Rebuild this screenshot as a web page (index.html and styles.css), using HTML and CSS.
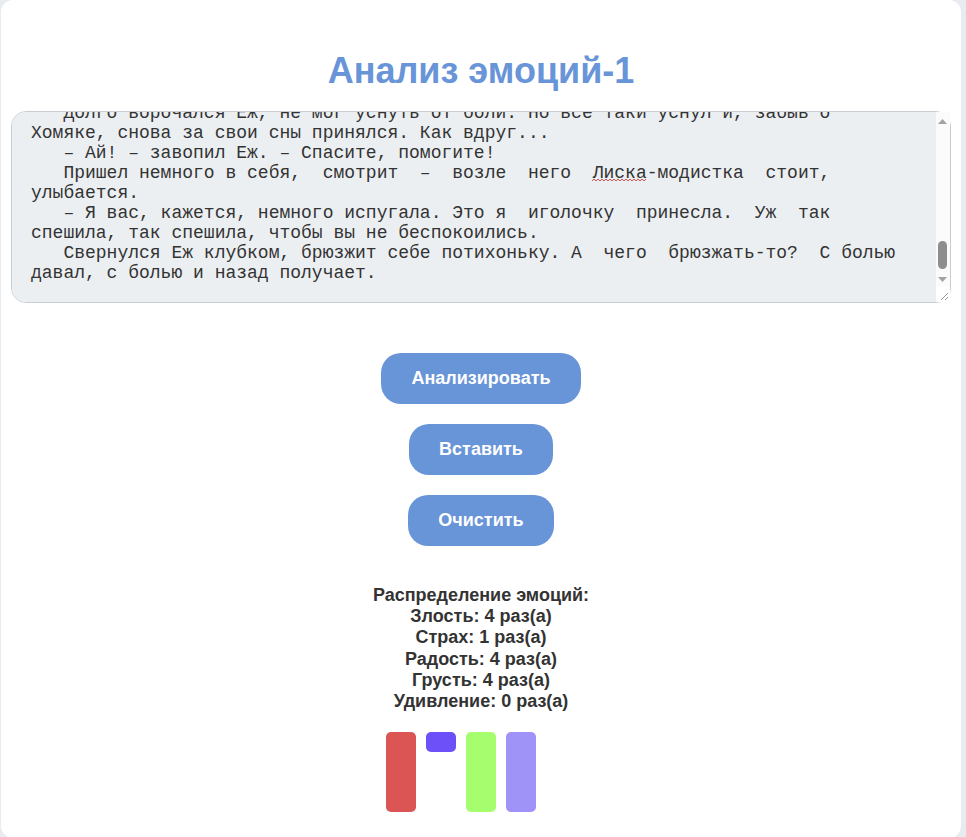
FILE: index.html
```html
<!DOCTYPE html>
<html lang="ru">
<head>
<meta charset="utf-8">
<title>Анализ эмоций-1</title>
<link rel="stylesheet" href="styles.css">
</head>
<body>
<main class="card">
  <h1 class="title">Анализ эмоций-1</h1>
  <div class="editor">
    <textarea class="story" id="story" spellcheck="false">   Жил-был в лесу Еж. Был он колючий, сердитый и никого к себе близко не подпускал. Соседи его сторонились, а он и рад: никто не мешает спать да сны смотреть.
   Любил Еж поспать. Заберется под старый пень, свернется клубком и спит до самого обеда. А во сне видит то грибы, то яблоки, то целую гору сладких ягод.
   Однажды пришел к нему Хомяк и говорит:
   – Одолжи, Еж, мне иголочку. Хочу себе жилетку зашить, порвалась совсем.
   – Ишь чего захотел! – фыркнул Еж. – Иголок у меня и самому мало.
   – Да у тебя их целая тыща! – удивился Хомяк. – Одной не жалко.
   – Не жалко, говоришь? А больно будет кому? Мне будет больно, а не тебе.
   Подумал Еж, подумал, да и выдернул иголку. Больно было, но отдал. Ушел Хомяк довольный, а Еж улегся под куст и стал ворчать.
   – Ходят тут всякие, спать не дают. Иголки им подавай! А кто мне мои иголки вернет? Никто не вернет.
   На другой день пришла Белка.
   – Еж, голубчик, дай иголочку. Орешки на зиму нанизывать буду.
   Опять выдернул Еж иголку, опять больно было. Белка поблагодарила и ускакала, а Еж сидит, бок потирает.
   Потом прибежал Заяц, за ним Мышка, а за Мышкой и Сорока прилетела. Всем нужна иголочка, всем хочется что-нибудь зашить, подшить да нанизать.
   – Мне бы пуговку пришить, – пищит Мышка.
   – А мне бы ушко заштопать, – просит Заяц.
   – А мне бы бусы собрать, – стрекочет Сорока.
   Никому Еж не отказал. Всем по иголочке дал. Только бока у него теперь голые стали, а на спине и вовсе проплешина.
   К вечеру у Ежа на боку совсем мало иголок осталось. Лег он спать, а сон не идет: то тут колет, то там ноет.
   – Вот ведь как бывает, – бормочет Еж. – Хотел как лучше, а вышло как всегда. Добрым быть – дело хорошее, да уж больно колючее.
   А в лесу тем временем все при деле. Хомяк жилетку зашил, Белка орешки нанизала, Заяц ушко заштопал, Мышка пуговку пришила, а Сорока бусы собрала и на ветке красуется.
   Долго ворочался Еж, не мог уснуть от боли. Но все таки уснул и, забыв о Хомяке, снова за свои сны принялся. Как вдруг...
   – Ай! – завопил Еж. – Спасите, помогите!
   Пришел немного в себя,  смотрит  –  возле  него  Лиска-модистка  стоит, улыбается.
   – Я вас, кажется, немного испугала. Это я  иголочку  принесла.  Уж  так спешила, так спешила, чтобы вы не беспокоились.
   Свернулся Еж клубком, брюзжит себе потихоньку. А  чего  брюзжать-то?  С болью давал, с болью и назад получает.</textarea>
    <svg class="spell" width="54" height="4" viewBox="0 0 54 4" aria-hidden="true">
      <path d="M0 3 L2 1 L4 3 L6 1 L8 3 L10 1 L12 3 L14 1 L16 3 L18 1 L20 3 L22 1 L24 3 L26 1 L28 3 L30 1 L32 3 L34 1 L36 3 L38 1 L40 3 L42 1 L44 3 L46 1 L48 3 L50 1 L52 3 L54 1" fill="none" stroke="#e05252" stroke-width="1"/>
    </svg>
    <div class="vscroll" aria-hidden="true">
      <svg class="arrow arrow-up" width="9" height="5" viewBox="0 0 9 5"><path d="M4.5 0 L9 5 L0 5 Z" fill="#a3a3a3"/></svg>
      <div class="thumb"></div>
      <svg class="arrow arrow-down" width="9" height="5" viewBox="0 0 9 5"><path d="M0 0 L9 0 L4.5 5 Z" fill="#a3a3a3"/></svg>
    </div>
    <div class="grip" aria-hidden="true">
      <svg width="14" height="15" viewBox="0 0 14 15"><path d="M5 13 L12 6 M9 13 L12 10" stroke="#9a9a9a" stroke-width="1" fill="none"/></svg>
    </div>
  </div>
  <div class="actions">
    <button class="btn" type="button">Анализировать</button>
    <button class="btn" type="button">Вставить</button>
    <button class="btn" type="button">Очистить</button>
  </div>
  <div class="result">
    <div>Распределение эмоций:</div>
    <div>Злость: 4 раз(а)</div>
    <div>Страх: 1 раз(а)</div>
    <div>Радость: 4 раз(а)</div>
    <div>Грусть: 4 раз(а)</div>
    <div>Удивление: 0 раз(а)</div>
  </div>
  <div class="chart">
    <div class="bar bar-anger" style="height:80px"></div>
    <div class="bar bar-fear" style="height:20px"></div>
    <div class="bar bar-joy" style="height:80px"></div>
    <div class="bar bar-sad" style="height:80px"></div>
    <div class="bar bar-surprise" style="height:0px"></div>
  </div>
</main>
<script src="script.js"></script>
</body>
</html>
```

FILE: styles.css
```css
html, body {
  margin: 0;
  padding: 0;
}
body {
  background: #e8ebef;
  font-family: "Liberation Sans", Arial, sans-serif;
  color: #333;
}
.card {
  box-sizing: border-box;
  width: 960px;
  margin: 0 5px 0 1px;
  padding: 0 10px 26px;
  background: #ffffff;
  border-radius: 12px;
  display: flex;
  flex-direction: column;
  align-items: center;
}
.title {
  margin: 50px 0 19px;
  font-size: 36px;
  font-weight: bold;
  color: #6894d8;
  text-align: center;
}
.editor {
  position: relative;
  width: 940px;
  height: 192px;
}
.story {
  box-sizing: border-box;
  display: block;
  width: 940px;
  height: 192px;
  padding: 19px 35px 19px 19px;
  margin: 0;
  border: 1px solid #c9ccd0;
  border-radius: 15px;
  background: #eceff2;
  color: #333;
  font-family: "Liberation Mono", "Courier New", monospace;
  font-size: 18px;
  line-height: 20px;
  resize: none;
  outline: none;
  overflow-y: auto;
  scrollbar-width: none;
}
.spell {
  position: absolute;
  left: 581px;
  top: 67px;
  pointer-events: none;
}
.vscroll {
  position: absolute;
  top: 1px;
  right: 1px;
  width: 14px;
  height: 175px;
  background: #fbfbfb;
  pointer-events: none;
}
.arrow {
  position: absolute;
  left: 2px;
  display: block;
}
.arrow-up { top: 7px; }
.arrow-down { top: 165px; }
.thumb {
  position: absolute;
  left: 2px;
  top: 129px;
  width: 9px;
  height: 28px;
  border-radius: 5px;
  background: #8e8e8e;
}
.grip {
  position: absolute;
  right: 1px;
  bottom: 1px;
  width: 14px;
  height: 15px;
  background: #ffffff;
  pointer-events: none;
}
.grip svg {
  display: block;
}
.actions {
  margin-top: 50px;
  display: flex;
  flex-direction: column;
  align-items: center;
  gap: 20px;
}
.btn {
  background: #6894d8;
  color: #ffffff;
  border: none;
  border-radius: 20px;
  padding: 15px 30px;
  font-family: "Liberation Sans", Arial, sans-serif;
  font-size: 18px;
  font-weight: bold;
  line-height: 21px;
  cursor: pointer;
}
.result {
  margin-top: 39px;
  text-align: center;
  font-size: 18px;
  font-weight: bold;
  line-height: 21.2px;
  color: #333;
}
.chart {
  margin-top: 20px;
  display: flex;
  align-items: flex-start;
  gap: 10px;
  height: 80px;
}
.bar {
  width: 30px;
  border-radius: 5px;
}
.bar-anger { background: #dc5555; }
.bar-fear { background: #6e50f8; }
.bar-joy { background: #a6fd6e; }
.bar-sad { background: #9f93f8; }
.bar-surprise { background: #f2d35e; }
```

FILE: script.js
```js
var story = document.getElementById('story');
story.scrollTop = story.scrollHeight;
```
